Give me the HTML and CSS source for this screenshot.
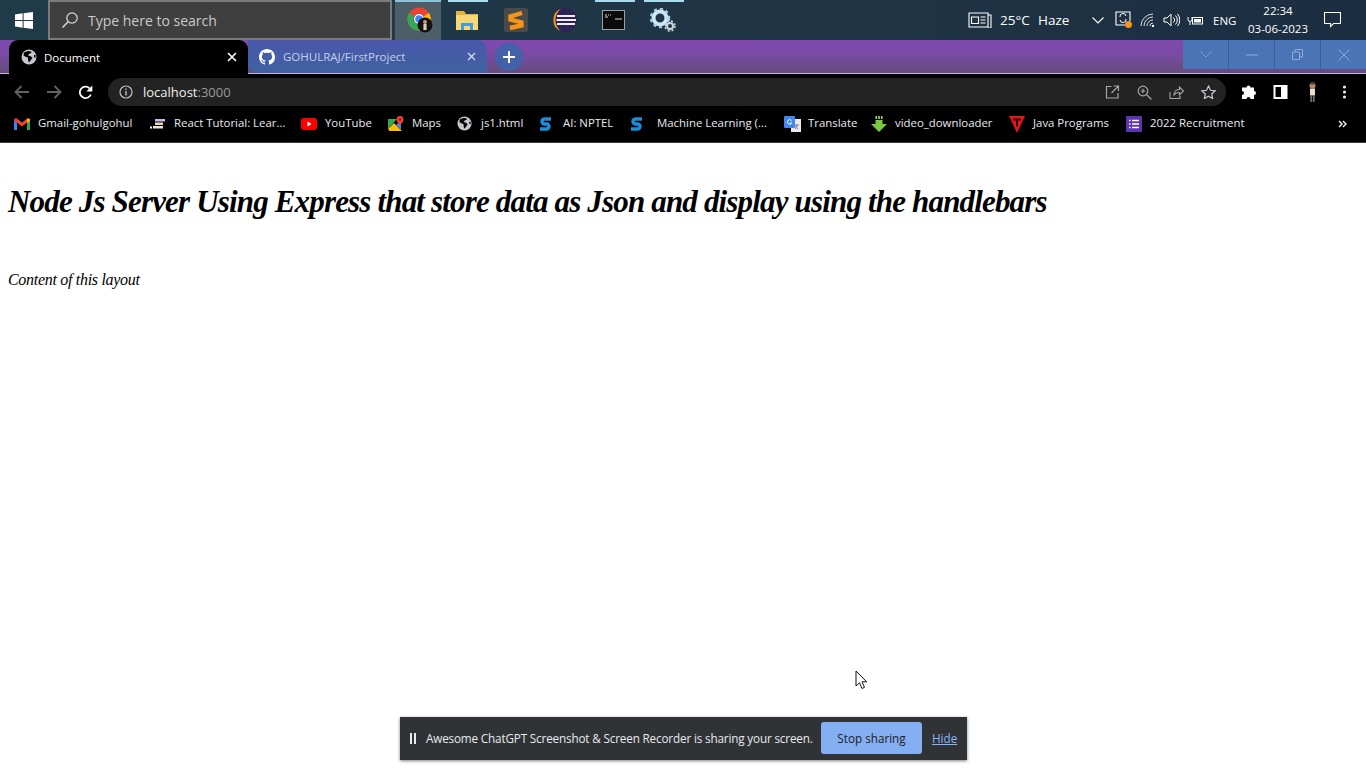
FILE: index.html
```html
<!DOCTYPE html>
<html lang="en">
<head>
<meta charset="utf-8">
<title>Document</title>
<link rel="stylesheet" href="styles.css">
</head>
<body>
<div class="taskbar">
  <div class="start"><svg width="18" height="17" viewBox="0 0 18 17"><path fill="#fff" d="M0 2.4 7.6 1.3V8H0zM8.6 1.2 18 0V8H8.6zM0 9h7.6v6.7L0 14.6zM8.6 9H18v8L8.6 15.8z"/></svg></div>
  <div class="search">
    <svg class="search-icon" width="18" height="18" viewBox="0 0 18 18"><circle cx="11" cy="7" r="5.2" fill="none" stroke="#ddd" stroke-width="1.2"/><path d="M7.2 10.8 1.5 16.5" stroke="#ddd" stroke-width="1.4"/></svg>
    <span>Type here to search</span>
  </div>
  <div class="apps">
    <div class="app app-active"><svg width="26" height="26" viewBox="0 0 26 26"><circle cx="12" cy="12" r="8.5" fill="none" stroke="#ea4335" stroke-width="6"/><path d="M4.6 7.6A8.5 8.5 0 0 0 12 20.5" fill="none" stroke="#34a853" stroke-width="6"/><path d="M12 20.5A8.5 8.5 0 0 0 19.4 7.6" fill="none" stroke="#fbbc05" stroke-width="6"/><circle cx="12" cy="12" r="5" fill="#fff"/><circle cx="12" cy="12" r="3.8" fill="#4285f4"/><circle cx="18" cy="18" r="7.5" fill="#111"/><circle cx="18" cy="15" r="2" fill="#c99a78"/><rect x="16.4" y="17" width="3.2" height="6" fill="#d8cfc0"/></svg></div>
    <div class="app app-open"><svg width="24" height="22" viewBox="0 0 24 22"><path fill="#e8b33a" d="M1 2h8l2 3h12v16H1z"/><path fill="#f7d775" d="M1 6h22v15H1z"/><path fill="#3f9fd8" d="M6 21v-7h12v7h-3v-4H9v4z"/></svg></div>
    <div class="app"><svg width="24" height="24" viewBox="0 0 24 24"><rect width="24" height="24" rx="2" fill="#4a4a48"/><path fill="none" stroke="#f5951d" stroke-width="4.4" d="M18 5 6.500 8.500v3l11 3v3L6 20"/></svg></div>
    <div class="app"><svg width="26" height="26" viewBox="0 0 26 26"><circle cx="13" cy="13" r="12" fill="#2c2255"/><path d="M9 1.8A12 12 0 0 0 9 24.2 14 14 0 0 1 9 1.8z" fill="#f7941e"/><path d="M5 9h18M4.500 13h19.500M5 17h18" stroke="#f0eef8" stroke-width="1.900"/></svg></div>
    <div class="app app-open"><svg width="23" height="20" viewBox="0 0 23 20"><rect x=".5" y=".5" width="22" height="19" fill="#0b0b0b" stroke="#9aa0a6"/><path d="M3 5h2M6 5h1M8 5h1M3 7h3M13 9h7" stroke="#ddd" stroke-width="1.200"/></svg></div>
    <div class="app app-open"><svg width="26" height="24" viewBox="0 0 26 24"><circle cx="10" cy="10" r="6.500" fill="none" stroke="#cfe6f5" stroke-width="4"/><circle cx="10" cy="10" r="9" fill="none" stroke="#a8cde6" stroke-width="2.500" stroke-dasharray="3 3"/><circle cx="20" cy="18" r="3" fill="none" stroke="#c9d6de" stroke-width="2"/><circle cx="20" cy="18" r="5" fill="none" stroke="#c9d6de" stroke-width="1.500" stroke-dasharray="2 2"/></svg></div>
  </div>
  <div class="tray">
    <svg class="news" width="24" height="16" viewBox="0 0 24 16"><path fill="none" stroke="#fff" stroke-width="1.100" d="M1 1h19v14H1zM20 3h3v11.500a.5.5 0 0 1-3 .5M3.500 5h7v6.500h-7zM12.500 5h5M12.500 8h5M12.500 11h5"/></svg>
    <span class="temp">25°C</span>
    <span class="haze">Haze</span>
    <svg class="chev" width="12" height="7" viewBox="0 0 12 7"><path d="M.5.5 6 6l5.500-5.500" fill="none" stroke="#fff" stroke-width="1.100"/></svg>
    <svg class="tray-ic" width="18" height="18" viewBox="0 0 18 18"><path d="M15 10V1H1v13h9" fill="none" stroke="#fff" stroke-width="1.100"/><path d="M5 6a3 3 0 0 1 6-1M11 8a3 3 0 0 1-6 1" fill="none" stroke="#fff"/><circle cx="13.500" cy="13.500" r="3.500" fill="#f7941e"/></svg>
    <svg class="tray-ic" width="16" height="14" viewBox="0 0 16 14"><g fill="none" stroke="#ddd"><path d="M1 13A12 12 0 0 1 13 1"/><path d="M4 13A9 9 0 0 1 13 4"/><path d="M7 13A6 6 0 0 1 13 7"/><path d="M10 13A3 3 0 0 1 13 10"/></g><circle cx="13" cy="13" r="1.200" fill="#fff"/></svg>
    <svg class="tray-ic" width="17" height="14" viewBox="0 0 17 14"><path d="M1 5h3l4-4v12L4 9H1z M10.500 4.500a3.500 3.500 0 0 1 0 5M12.500 2.500a6.500 6.500 0 0 1 0 9M14.500 1a9 9 0 0 1 0 12" fill="none" stroke="#fff"/></svg>
    <svg class="tray-ic" width="17" height="11" viewBox="0 0 17 11"><rect x="5.500" y="2.500" width="10" height="6.500" fill="none" stroke="#fff"/><rect x="7" y="4" width="7" height="3.500" fill="#fff"/><path d="M1 2v2.500a2 2 0 0 0 4 0V2M3 7v3" stroke="#fff" fill="none"/></svg>
    <span class="eng">ENG</span>
    <div class="clock"><span>22:34</span><span>03-06-2023</span></div>
    <svg class="notif" width="17" height="16" viewBox="0 0 17 16"><path d="M.5.500h16v11h-7l-3 3v-3h-6z" fill="none" stroke="#fff" stroke-width="1.100"/></svg>
  </div>
</div>

<div class="tabstrip">
  <div class="tab tab-active">
    <svg class="favicon" width="16" height="16" viewBox="0 0 16 16"><circle cx="8" cy="8" r="7.500" fill="#c4c7cb"/><path fill="#000" d="M7 2 3 3.500l-.5 3L5 8l2 .5V11l1 2.500 2-2.500 1.500-2.500L9 7 7 6.500 8.500 4.500 10.500 4 10 2.500zM13 6h1.500v3L13 8z"/></svg>
    <span class="tab-title">Document</span>
    <svg class="tab-x" width="10" height="10" viewBox="0 0 10 10"><path d="M1 1l8 8M9 1 1 9" stroke="#fff" stroke-width="1.600"/></svg>
  </div>
  <div class="tab tab-other">
    <svg class="favicon" width="16" height="16" viewBox="0 0 16 16"><path fill="#fff" d="M8 0C3.580 0 0 3.580 0 8c0 3.540 2.290 6.530 5.470 7.590.4.070.55-.17.55-.38 0-.19-.01-.82-.01-1.490-2.010.37-2.530-.49-2.690-.94-.09-.23-.48-.94-.82-1.130-.28-.15-.68-.52-.01-.53.630-.01 1.080.58 1.230.82.720 1.210 1.870.87 2.330.66.070-.52.280-.87.510-1.070-1.780-.2-3.640-.89-3.640-3.950 0-.87.310-1.590.820-2.150-.08-.2-.36-1.020.08-2.120 0 0 .67-.21 2.200.82.640-.18 1.320-.27 2-.27s1.360.09 2 .27c1.530-1.040 2.200-.82 2.200-.82.440 1.100.16 1.920.08 2.120.51.560.82 1.270.82 2.150 0 3.070-1.870 3.750-3.650 3.950.29.250.54.730.54 1.480 0 1.070-.01 1.930-.01 2.200 0 .21.150.46.550.38A8.010 8.010 0 0 0 16 8c0-4.420-3.580-8-8-8z"/></svg>
    <span class="tab-title tab-title-dim">GOHULRAJ/FirstProject</span>
    <svg class="tab-x" width="9" height="9" viewBox="0 0 9 9"><path d="M1 1l7 7M8 1 1 8" stroke="#d6dcf0" stroke-width="1.300"/></svg>
  </div>
  <div class="newtab"><svg width="14" height="14" viewBox="0 0 14 14"><path d="M7 1v12M1 7h12" stroke="#fff" stroke-width="2"/></svg></div>
  <div class="winctl">
    <div class="wbtn"><svg width="12" height="7" viewBox="0 0 12 7"><path d="M.5.500 6 6 11.500.5" fill="none" stroke="#7f9fd0"/></svg></div>
    <div class="wbtn"><svg width="12" height="2" viewBox="0 0 12 2"><path d="M0 1h12" stroke="#8fabd6"/></svg></div>
    <div class="wbtn"><svg width="11" height="11" viewBox="0 0 11 11"><path d="M.5 3h7v7.500h-7zM3 3V.5h7.500V8H8" fill="none" stroke="#8fabd6"/></svg></div>
    <div class="wbtn"><svg width="12" height="12" viewBox="0 0 12 12"><path d="M.5.500l11 11M11.500.5l-11 11" stroke="#8fabd6"/></svg></div>
  </div>
</div>

<div class="toolbar">
  <svg class="nav" width="16" height="14" viewBox="0 0 16 14"><path d="M15 7H2M7.500 1 1.500 7l6 6" fill="none" stroke="#626262" stroke-width="1.800"/></svg>
  <svg class="nav" width="16" height="14" viewBox="0 0 16 14"><path d="M1 7h13M8.500 1l6 6-6 6" fill="none" stroke="#626262" stroke-width="1.800"/></svg>
  <svg class="nav" width="15" height="15" viewBox="0 0 15 15"><path d="M12.800 9.500A5.700 5.700 0 1 1 11.500 3.300" fill="none" stroke="#fff" stroke-width="1.800"/><path fill="#fff" d="M14.300.5v6h-6z"/></svg>
  <div class="omnibox">
    <svg width="14" height="14" viewBox="0 0 14 14"><circle cx="7" cy="7" r="6" fill="none" stroke="#bdc1c6" stroke-width="1.200"/><path d="M7 6v4.500M7 3.400v1.500" stroke="#bdc1c6" stroke-width="1.400"/></svg>
    <span class="url"><b>localhost</b>:3000</span>
    <div class="omni-actions">
      <svg width="15" height="14" viewBox="0 0 14 14"><path d="M6 1.500H1v11.500h11.500V8M8 1h5v5M13 1 6 8" fill="none" stroke="#a6a6a6" stroke-width="1.200"/></svg>
      <svg width="15" height="15" viewBox="0 0 15 15"><circle cx="6" cy="6" r="4.800" fill="none" stroke="#a6a6a6" stroke-width="1.200"/><path d="M9.500 9.500 14.500 14.500M3.800 6h4.400M6 3.800v4.400" stroke="#a6a6a6" stroke-width="1.200"/></svg>
      <svg width="15" height="14" viewBox="0 0 15 14"><path d="M1 7v6.500h10V11M5 10c0-4 3-5.500 5.500-5.500V2L14.500 6l-4 4V7.500C8 7.500 6 8.500 5 10z" fill="none" stroke="#a6a6a6" stroke-width="1.100"/></svg>
      <svg width="15" height="14" viewBox="0 0 15 14"><path d="M7.500 1 9.500 5.300l4.700.5-3.500 3.200 1 4.600-4.200-2.400-4.200 2.400 1-4.600L.8 5.800l4.700-.5z" fill="none" stroke="#c4c7cb" stroke-width="1.200"/></svg>
    </div>
  </div>
  <div class="tool-actions">
    <svg width="15" height="15" viewBox="0 0 15 15"><path fill="#fff" d="M5.500 2.500a2 2 0 0 1 4 0H13v3.500a2 2 0 0 1 0 4V14H9.500a2 2 0 0 0-4 0H1v-4a2 2 0 0 0 0-4V2.500z"/></svg>
    <svg width="15" height="14" viewBox="0 0 14 14"><rect x="1" y="1" width="12" height="12" fill="none" stroke="#fff" stroke-width="2"/><rect x="7.500" y="1" width="6" height="12" fill="#fff"/></svg>
    <svg width="15" height="22" viewBox="0 0 12 22"><circle cx="6" cy="4.500" r="3" fill="#b98a68"/><path fill="#5a3a28" d="M3 3.500 4 1h4l1 2.500z"/><rect x="3.500" y="7.500" width="5" height="7" fill="#e8e0cc"/><rect x="3.800" y="14.500" width="1.800" height="6.500" fill="#6d6d6d"/><rect x="6.400" y="14.500" width="1.800" height="6.500" fill="#6d6d6d"/></svg>
    <svg width="15" height="14" viewBox="0 0 4 14"><circle cx="2" cy="2" r="1.600" fill="#e8eaed"/><circle cx="2" cy="7" r="1.600" fill="#e8eaed"/><circle cx="2" cy="12" r="1.600" fill="#e8eaed"/></svg>
  </div>
</div>

<div class="bookmarks">
  <div class="bm"><svg width="16" height="12" viewBox="0 0 16 12"><path fill="#4285f4" d="M0 2v10h3V5z"/><path fill="#34a853" d="M13 5v7h3V2z"/><path fill="#ea4335" d="M0 1.500 2 0l6 4.500L14 0l2 1.500v1L8 8.500 0 2.500z"/><path fill="#fbbc05" d="M13 .8 16 1v2l-3 2z"/></svg><span>Gmail-gohulgohul</span></div>
  <div class="bm"><svg width="16" height="12" viewBox="0 0 16 12"><rect x="5" y="1" width="10" height="2.500" fill="#cbb8f0"/><rect x="5" y="4.500" width="8" height="2.500" fill="#f0d9b0"/><rect x="3" y="8" width="10" height="2.500" fill="#e8e8e8"/><rect x="0" y="8.500" width="2" height="2" fill="#fff"/></svg><span>React Tutorial: Lear...</span></div>
  <div class="bm"><svg width="16" height="12" viewBox="0 0 16 12"><rect width="16" height="12" rx="3" fill="#f00"/><path fill="#fff" d="M6.500 3.500v5l4-2.500z"/></svg><span>YouTube</span></div>
  <div class="bm"><svg width="16" height="16" viewBox="0 0 16 16"><path fill="#34a853" d="M0 3h9L0 13z"/><path fill="#fbbc05" d="M0 13 6 7l8 8H1.500z"/><path fill="#4285f4" d="M8 9l5-5v10z"/><path fill="#ea4335" d="M12 0a3.500 3.500 0 0 1 3.500 3.500C15.500 6 12 9 12 9S8.500 6 8.500 3.500A3.500 3.500 0 0 1 12 0z"/><circle cx="12" cy="3.500" r="1.200" fill="#8c1d18"/></svg><span>Maps</span></div>
  <div class="bm"><svg width="15" height="15" viewBox="0 0 16 16"><circle cx="8" cy="8" r="7.500" fill="#c4c7cb"/><path fill="#000" d="M7 2 3 3.500l-.5 3L5 8l2 .5V11l1 2.500 2-2.500 1.500-2.500L9 7 7 6.500 8.500 4.500 10.500 4 10 2.500zM13 6h1.500v3L13 8z"/></svg><span>js1.html</span></div>
  <div class="bm"><svg width="13" height="16" viewBox="0 0 13 16"><path fill="none" stroke="#1a8fd8" stroke-width="3.400" d="M12 3H5.500a2.500 2.500 0 0 0 0 5h2a2.500 2.500 0 0 1 0 5H1"/></svg><span>AI: NPTEL</span></div>
  <div class="bm bm-wide"><svg width="13" height="16" viewBox="0 0 13 16"><path fill="none" stroke="#1a8fd8" stroke-width="3.400" d="M12 3H5.500a2.500 2.500 0 0 0 0 5h2a2.500 2.500 0 0 1 0 5H1"/></svg><span>Machine Learning (...</span></div>
  <div class="bm"><svg width="17" height="16" viewBox="0 0 17 16"><rect x="7" y="3" width="10" height="13" fill="#e8eaed"/><rect width="11" height="12" rx="1" fill="#4285f4"/><path d="M7.500 4.500a2.300 2.300 0 1 0 .3 2.500H5.800" fill="none" stroke="#fff"/><path d="M10 9h5M12.500 8v1M14 9l-3 4M11 9.500l3 3.500" stroke="#777" stroke-width=".9"/></svg><span>Translate</span></div>
  <div class="bm"><svg width="16" height="16" viewBox="0 0 16 16"><path fill="#7ac943" d="M4.500 4h7v4H16l-8 8-8-8h4.500z"/><path fill="#a6e060" d="M4.500 0h1.500v3H4.500zM7.200 0h1.600v3H7.200zM10 0h1.500v3H10z"/></svg><span>video_downloader</span></div>
  <div class="bm"><svg width="16" height="18" viewBox="0 0 16 18"><path fill="#e3161c" d="M0 1h16l-8 17z"/><path fill="#220406" d="M4 3.500h8v2H9v6H7v-6H4z"/></svg><span>Java Programs</span></div>
  <div class="bm"><svg width="16" height="16" viewBox="0 0 16 16"><rect width="16" height="16" rx="1" fill="#5e35b1"/><path d="M3 4.500h1.500M6 4.500h7M3 8h1.500M6 8h7M3 11.500h1.500M6 11.500h7" stroke="#fff" stroke-width="1.700"/></svg><span>2022 Recruitment</span></div>
  <svg class="bm-more" width="9" height="8" viewBox="0 0 9 8"><path d="M1 1l3 3-3 3M5 1l3 3-3 3" fill="none" stroke="#e8eaed" stroke-width="1.500"/></svg>
</div>

<main class="page">
  <h1>Node Js Server Using Express that store data as Json and display using the handlebars</h1>
  <p>Content of this layout</p>
</main>

<svg class="cursor" width="13" height="20" viewBox="0 0 13 20"><path d="M1 1v15l3.500-3.200L7 18.500l2.500-1.200L7 11.800h4.700z" fill="#fff" stroke="#111"/></svg>

<div class="share">
  <svg width="7" height="11" viewBox="0 0 7 11"><path d="M1 0h2v11H1zM5 0h2v11H5z" fill="#e8eaed"/></svg>
  <span class="share-msg">Awesome ChatGPT Screenshot &amp; Screen Recorder is sharing your screen.</span>
  <button class="stop">Stop sharing</button>
  <a class="hide" href="#">Hide</a>
</div>
</body>
</html>
```

FILE: styles.css
```css
* { box-sizing: border-box; }
html, body { margin: 0; padding: 0; }
body {
  width: 1366px;
  height: 768px;
  overflow: hidden;
  background: #fff;
  position: relative;
  font-family: "Open Sans", "Noto Sans", sans-serif;
}

/* Windows taskbar */
.taskbar {
  height: 40px;
  display: flex;
  background: linear-gradient(90deg, #1f3a49 0%, #1f3545 50%, #1c2e42 100%);
  color: #fff;
}
.start { width: 48px; display: flex; align-items: center; justify-content: center; }
.search {
  width: 344px;
  height: 40px;
  background: #3f3f3f;
  border: 2px solid #7b7b7b;
  display: flex;
  align-items: center;
  padding-left: 11px;
  gap: 9px;
  font-size: 14px;
  color: #c9c9c9;
}
.apps { display: flex; margin-left: 3px; }
.app { width: 49px; height: 40px; display: flex; align-items: center; justify-content: center; position: relative; padding-right: 4px; }
.app-active { background: #4c5f68; width: 46px; margin-right: 3px; padding: 0 0 0 3px; }
.app-active::before, .app-open::before {
  content: "";
  position: absolute;
  top: 0;
  left: 4px;
  right: 5px;
  height: 2px;
  background: #a9dcef;
}
.app-active::before { left: 0; right: 0; background: #8fc3da; }
.tray { flex: 1; display: flex; align-items: center; position: relative; font-size: 13.500px; }
.news { margin-left: 279px; }
.temp { margin-left: 8px; width: 38px; }
.haze { width: 54px; }
.tray-ic { margin-left: 7px; }
.chev + .tray-ic { margin-left: 11px; }
.eng { margin-left: 9px; font-size: 11.500px; width: 36px; }
.clock { display: flex; flex-direction: column; align-items: center; width: 58px; font-size: 11.500px; line-height: 18px; white-space: nowrap; }
.notif { margin-left: 17px; }

/* Browser tab strip */
.tabstrip {
  height: 34px;
  display: flex;
  background: linear-gradient(180deg, #7f49ae 0%, #7c4aa8 35%, #654c7c 100%);
  border-bottom: 1px solid #c9b2dd;
  padding-left: 9px;
  position: relative;
}
.tab {
  width: 239px;
  height: 33px;
  display: flex;
  align-items: center;
  padding-left: 12px;
  font-size: 11.500px;
  color: #fff;
}
.tab-active { height: 34px; background: #000; border-radius: 9px 9px 0 0; }
.tab-other { background: linear-gradient(180deg, #4a57ab, #3f62a0); border-radius: 0 9px 0 9px; padding-left: 11px; }
.tab-title { margin-left: 7px; flex: 1; }
.tab-title-dim { color: #c5cfe8; margin-left: 8px; }
.tab-x { margin-right: 11px; }
.newtab {
  width: 28px;
  height: 28px;
  border-radius: 50%;
  background: #4361a8;
  display: flex;
  align-items: center;
  justify-content: center;
  margin: 3px 0 0 8px;
}
.winctl { margin-left: auto; height: 29px; display: flex; gap: 1px; background: #3e5f9e; }
.wbtn { width: 45px; height: 29px; background: #4a74b6; display: flex; align-items: center; justify-content: center; }

/* Browser toolbar */
.toolbar {
  height: 34px;
  padding: 2px 0 0 14px;
  background: #000;
  display: flex;
  align-items: center;
}
.nav { margin-right: 16px; }
.nav:nth-child(3) { margin-right: 15px; }
.omnibox {
  width: 1118px;
  height: 28px;
  border-radius: 14px;
  background: #222322;
  display: flex;
  align-items: center;
  padding-left: 11px;
  font-size: 13px;
}
.url { margin-left: 10px; color: #9b9b9b; }
.url b { font-weight: 400; color: #f1f1f1; }
.omni-actions { margin-left: auto; display: flex; align-items: center; gap: 17px; margin-right: 10px; }
.tool-actions { display: flex; align-items: center; margin-left: 15px; gap: 17px; }

/* Bookmarks */
.bookmarks {
  height: 35px;
  padding: 0 0 3px 14px;
  background: #000;
  border-bottom: 1px solid #3a3a3a;
  display: grid;
  grid-template-columns: 136px 151px 87px 69px 82px 91px 154px 87px 138px 117px 1fr;
  align-items: center;
  position: relative;
}
.bm {
  display: flex;
  align-items: center;
  color: #e8eaed;
  font-size: 11.400px;
  white-space: nowrap;
  height: 18px;
  position: relative;
}
.bm svg { flex: none; }
.bm span { position: absolute; left: 24px; top: 0; line-height: 16px; }
.bm-wide span { left: 27px; }
.bm-more { position: absolute; right: 19px; top: 12px; }

/* Page */
.page { padding: 0 8px; color: #000; font-family: "Liberation Serif", serif; font-style: italic; }
.page h1 {
  margin: 0;
  padding-top: 40px;
  font-size: 31px;
  line-height: 37px;
  font-weight: 700;
  letter-spacing: -.83px;
  white-space: nowrap;
}
.page p { margin: 0; padding-top: 51px; font-size: 16px; line-height: 18px; letter-spacing: -.3px; }

/* Overlays */
.cursor { position: absolute; left: 855px; top: 670px; }
.share {
  position: absolute;
  left: 400px;
  top: 717px;
  width: 567px;
  height: 43px;
  background: #303336;
  box-shadow: 0 1px 3px rgba(0,0,0,.5);
  display: flex;
  align-items: center;
  padding-left: 9px;
  color: #e8eaed;
  font-size: 11.700px;
}
.share-msg { margin: 0 0 2px 10px; width: 395px; white-space: nowrap; letter-spacing: -.15px; }
.stop {
  width: 101px;
  height: 32px;
  margin-bottom: 1px;
  border: 0;
  border-radius: 3px;
  background: #84aff2;
  color: #202124;
  font: inherit;
  padding: 0 0 1px;
}
.hide { margin: 0 0 2px 10px; color: #8ab4f8; text-decoration: underline; }
```
